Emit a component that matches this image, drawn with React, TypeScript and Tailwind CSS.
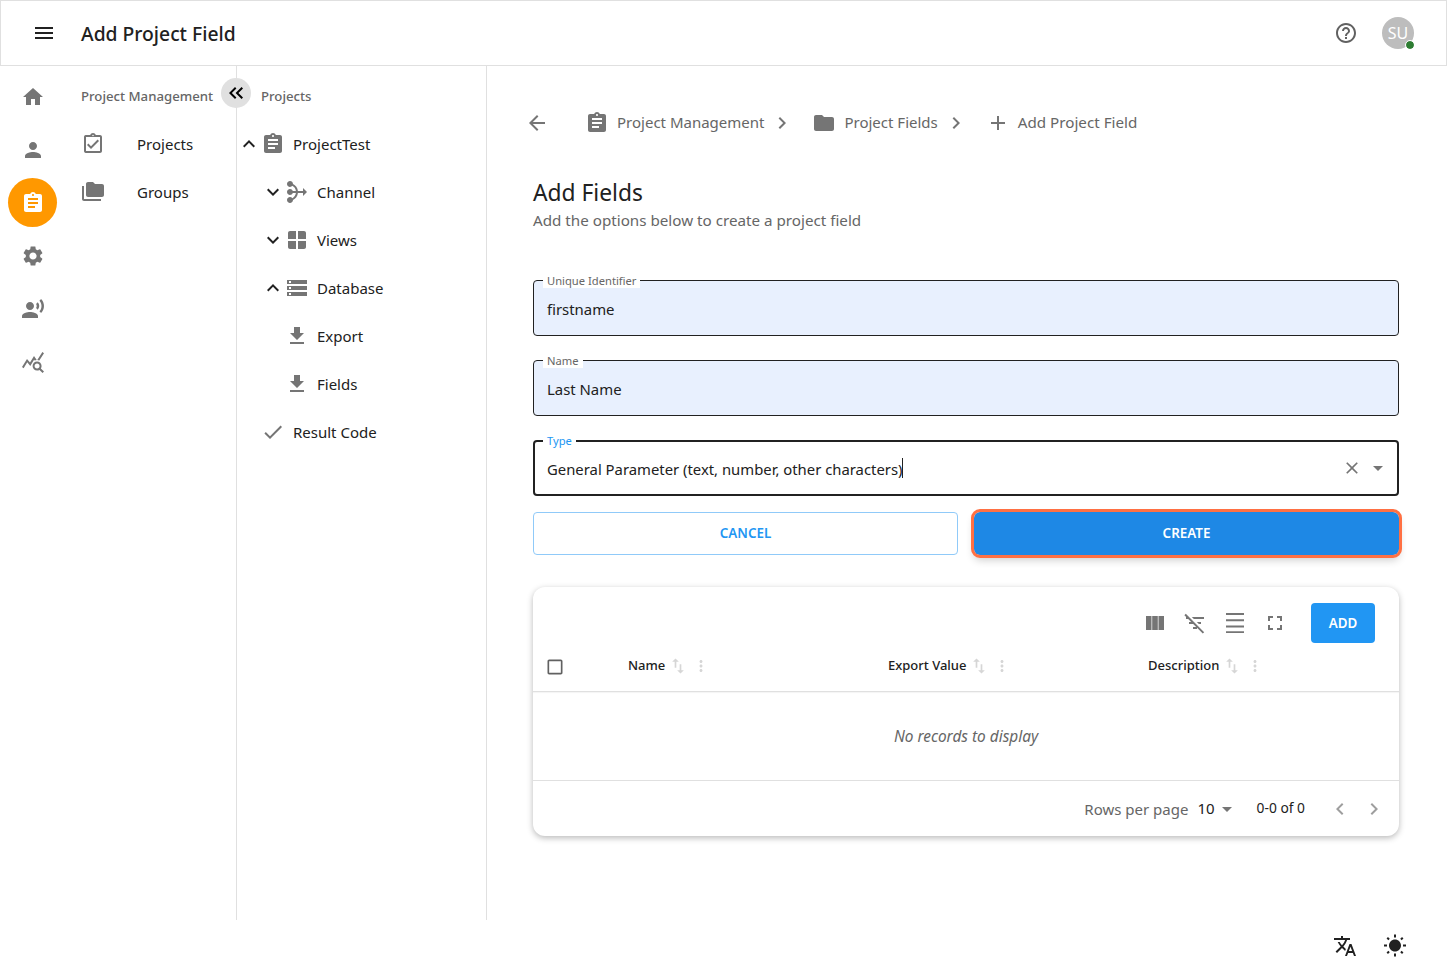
import type { FC } from 'react';

const paths = {
  menu: 'M3 18h18v-2H3v2zm0-5h18v-2H3v2zm0-7v2h18V6H3z',
  home: 'M10 20v-6h4v6h5v-8h3L12 3 2 12h3v8z',
  person: 'M12 12c2.21 0 4-1.79 4-4s-1.79-4-4-4-4 1.79-4 4 1.79 4 4 4zm0 2c-2.67 0-8 1.34-8 4v2h16v-2c0-2.66-5.33-4-8-4z',
  assignment: 'M19 3h-4.18C14.4 1.84 13.3 1 12 1c-1.3 0-2.4.84-2.82 2H5c-1.1 0-2 .9-2 2v14c0 1.1.9 2 2 2h14c1.1 0 2-.9 2-2V5c0-1.1-.9-2-2-2zm-7 0c.55 0 1 .45 1 1s-.45 1-1 1-1-.45-1-1 .45-1 1-1zm2 14H7v-2h7v2zm3-4H7v-2h10v2zm0-4H7V7h10v2z',
  settings: 'M19.14 12.94c.04-.3.06-.61.06-.94 0-.32-.02-.64-.07-.94l2.03-1.58c.18-.14.23-.41.12-.61l-1.92-3.32c-.12-.22-.37-.29-.59-.22l-2.39.96c-.5-.38-1.03-.7-1.62-.94l-.36-2.54c-.04-.24-.24-.41-.48-.41h-3.84c-.24 0-.43.17-.47.41l-.36 2.54c-.59.24-1.13.57-1.62.94l-2.39-.96c-.22-.08-.47 0-.59.22L2.74 8.87c-.12.21-.08.47.12.61l2.03 1.58c-.05.3-.09.63-.09.94s.02.64.07.94l-2.03 1.58c-.18.14-.23.41-.12.61l1.92 3.32c.12.22.37.29.59.22l2.39-.96c.5.38 1.03.7 1.62.94l.36 2.54c.05.24.24.41.48.41h3.84c.24 0 .44-.17.47-.41l.36-2.54c.59-.24 1.13-.56 1.62-.94l2.39.96c.22.08.47 0 .59-.22l1.92-3.32c.12-.22.07-.47-.12-.61l-2.01-1.58zM12 15.6c-1.98 0-3.6-1.62-3.6-3.6s1.62-3.6 3.6-3.6 3.6 1.62 3.6 3.6-1.62 3.6-3.6 3.6z',
  voice: 'M9 13c2.21 0 4-1.79 4-4s-1.79-4-4-4-4 1.79-4 4 1.79 4 4 4zm0 2c-2.67 0-8 1.34-8 4v2h16v-2c0-2.66-5.33-4-8-4zm7.76-9.64l-1.68 1.69c.84 1.18.84 2.71 0 3.89l1.68 1.69c2.02-2.02 2.02-5.07 0-7.27zM20.07 2l-1.63 1.63c2.77 3.02 2.77 7.56 0 10.74L20.07 16c3.9-3.89 3.91-9.95 0-14z',
  query: 'M19.88 18.47c.44-.7.7-1.51.7-2.39 0-2.49-2.01-4.5-4.5-4.5s-4.5 2.01-4.5 4.5 2.01 4.5 4.49 4.5c.88 0 1.7-.26 2.39-.7L21.58 23 23 21.58l-3.12-3.11zm-3.8.11c-1.38 0-2.5-1.12-2.5-2.5s1.12-2.5 2.5-2.5 2.5 1.12 2.5 2.5-1.12 2.5-2.5 2.5zm-.36-8.5c-.74.02-1.45.18-2.1.45l-.55-.83-3.8 6.18-3.01-3.52-3.63 5.81L1 17l5-8 3 3.5L13 6l2.72 4.08zm2.59.5c-.64-.28-1.33-.45-2.05-.49L21.38 2 23 3.18l-4.69 7.4z',
  turnedIn: 'M18 9l-1.41-1.42L10 14.17l-2.59-2.58L6 13l4 4zm1-6h-4.18C14.4 1.84 13.3 1 12 1c-1.3 0-2.4.84-2.82 2H5c-.14 0-.27.01-.4.04-.39.08-.74.28-1.01.55-.18.18-.33.4-.43.64-.1.23-.16.49-.16.77v14c0 .27.06.54.16.78s.25.45.43.64c.27.27.62.47 1.01.55.13.02.26.03.4.03h14c1.1 0 2-.9 2-2V5c0-1.1-.9-2-2-2zm-7-.25c.41 0 .75.34.75.75s-.34.75-.75.75-.75-.34-.75-.75.34-.75.75-.75zM19 19H5V5h14v14z',
  folderCopy: 'M3 19h17v2H3c-1.1 0-2-.9-2-2V6h2v13zM23 6v9c0 1.1-.9 2-2 2H7c-1.1 0-2-.9-2-2l.01-11C5.01 2.9 5.9 2 7 2h5l2 2h7c1.1 0 2 .9 2 2z',
  doubleLeft: 'M17.59 18L19 16.59 14.42 12 19 7.41 17.59 6l-6 6zM11 18l1.41-1.41L7.83 12l4.58-4.59L11 6l-6 6z',
  expandLess: 'M12 8l-6 6 1.41 1.41L12 10.83l4.59 4.58L18 14z',
  expandMore: 'M16.59 8.59L12 13.17 7.41 8.59 6 10l6 6 6-6z',
  mediation: 'M18 16l4-4-4-4v3h-5.06c-.34-3.1-2.26-5.72-4.94-7.05C7.96 2.31 6.64 1 5 1 3.34 1 2 2.34 2 4s1.34 3 3 3c.95 0 1.78-.45 2.33-1.14C9.23 6.9 10.6 8.77 10.92 11h-3.1C7.4 9.84 6.3 9 5 9c-1.66 0-3 1.34-3 3s1.34 3 3 3c1.3 0 2.4-.84 2.82-2h3.1c-.32 2.23-1.69 4.1-3.58 5.14C6.78 17.45 5.95 17 5 17c-1.66 0-3 1.34-3 3s1.34 3 3 3c1.64 0 2.96-1.31 2.99-2.95 2.68-1.33 4.6-3.95 4.94-7.05H18v3z',
  windowIcon: 'M3 5v6h8V3H5c-1.1 0-2 .9-2 2zm10-2v8h8V5c0-1.1-.9-2-2-2h-6zM3 13v6c0 1.1.9 2 2 2h6v-8H3zm10 8h6c1.1 0 2-.9 2-2v-6h-8v8z',
  storage: 'M2 20h20v-4H2v4zm2-3h2v2H4v-2zM2 4v4h20V4H2zm4 3H4V5h2v2zm-4 7h20v-4H2v4zm2-3h2v2H4v-2z',
  download: 'M19 9h-4V3H9v6H5l7 7 7-7zM5 18v2h14v-2H5z',
  check: 'M9 16.17L4.83 12l-1.42 1.41L9 19 21 7l-1.41-1.41z',
  back: 'M20 11H7.83l5.59-5.59L12 4l-8 8 8 8 1.41-1.41L7.83 13H20v-2z',
  right: 'M10 6L8.59 7.41 13.17 12l-4.58 4.59L10 18l6-6z',
  left: 'M15.41 7.41L14 6l-6 6 6 6 1.41-1.41L10.83 12z',
  folder: 'M10 4H4c-1.1 0-1.99.9-1.99 2L2 18c0 1.1.9 2 2 2h16c1.1 0 2-.9 2-2V8c0-1.1-.9-2-2-2h-8l-2-2z',
  add: 'M19 13h-6v6h-2v-6H5v-2h6V5h2v6h6v2z',
  help: 'M11 18h2v-2h-2v2zm1-16C6.48 2 2 6.48 2 12s4.48 10 10 10 10-4.48 10-10S17.52 2 12 2zm0 18c-4.41 0-8-3.59-8-8s3.59-8 8-8 8 3.59 8 8-3.59 8-8 8zm0-14c-2.21 0-4 1.79-4 4h2c0-1.1.9-2 2-2s2 .9 2 2c0 2-3 1.75-3 5h2c0-2.25 3-2.5 3-5 0-2.21-1.79-4-4-4z',
  close: 'M19 6.41L17.59 5 12 10.59 6.41 5 5 6.41 10.59 12 5 17.59 6.41 19 12 13.41 17.59 19 19 17.59 13.41 12z',
  dropDown: 'M7 10l5 5 5-5z',
  viewColumn: 'M3 5h5.5v14H3zM9.2 5h5.6v14H9.2zM15.5 5H21v14h-5.5z',
  filterOff: 'M10.83 8H21V6H8.83l2 2zm5 5H18v-2h-4.17l2 2zM14 16.83V18h-4v-2h3.17l-3-3H6v-2h2.17l-3-3H3V6h.17L1.39 4.22 2.8 2.81l18.38 18.38-1.41 1.41L14 16.83z',
  headline: 'M3 2h18v1.9H3zM3 8.3h18v1.9H3zM3 14.6h18v1.9H3zM3 20.2h18v1.9H3z',
  fullscreen: 'M7 14H5v5h5v-2H7v-3zm-2-4h2V7h3V5H5v5zm12 7h-3v2h5v-5h-2v3zM14 5v2h3v3h2V5h-5z',
  sort: 'M16 17.01V10h-2v7.01h-3L15 21l4-3.99h-3zM9 3L5 6.99h3V14h2V6.99h3L9 3z',
  moreVert: 'M12 8c1.1 0 2-.9 2-2s-.9-2-2-2-2 .9-2 2 .9 2 2 2zm0 2c-1.1 0-2 .9-2 2s.9 2 2 2 2-.9 2-2-.9-2-2-2zm0 6c-1.1 0-2 .9-2 2s.9 2 2 2 2-.9 2-2-.9-2-2-2z',
  checkbox: 'M19 5v14H5V5h14m0-2H5c-1.1 0-2 .9-2 2v14c0 1.1.9 2 2 2h14c1.1 0 2-.9 2-2V5c0-1.1-.9-2-2-2z',
  translate: 'M12.87 15.07l-2.54-2.51.03-.03c1.74-1.94 2.98-4.17 3.71-6.53H17V4h-7V2H8v2H1v1.99h11.17C11.5 7.92 10.44 9.75 9 11.35 8.07 10.32 7.3 9.19 6.69 8h-2c.73 1.63 1.73 3.17 2.98 4.56l-5.09 5.02L4 19l5-5 3.11 3.11.76-2.04zM18.5 10h-2L12 22h2l1.12-3h4.75L21 22h2l-4.5-12zm-2.62 7l1.62-4.33L19.12 17h-3.24z',
  sun: 'M6.76 4.84l-1.8-1.79-1.41 1.41 1.79 1.79 1.42-1.41zM4 10.5H1v2h3v-2zm9-9.95h-2V3.5h2V.55zm7.45 3.91l-1.41-1.41-1.79 1.79 1.41 1.41 1.79-1.79zm-3.21 13.7l1.79 1.8 1.41-1.41-1.8-1.79-1.4 1.4zM20 10.5v2h3v-2h-3zm-8-5c-3.31 0-6 2.69-6 6s2.69 6 6 6 6-2.69 6-6-2.69-6-6-6zm-1 16.95h2V19.5h-2v2.95zm-7.45-3.91l1.41 1.41 1.79-1.8-1.41-1.41-1.79 1.8z',
};

type IconName = keyof typeof paths;

const Icon: FC<{ name: IconName; className?: string }> = ({ name, className = 'w-6 h-6 text-[#757575]' }) => (
  <svg viewBox="0 0 24 24" fill="currentColor" className={`shrink-0 ${className}`}>
    <path d={paths[name]} />
  </svg>
);

const railItems: { name: IconName; active?: boolean }[] = [
  { name: 'home' },
  { name: 'person' },
  { name: 'assignment', active: true },
  { name: 'settings' },
  { name: 'voice' },
  { name: 'query' },
];

type TreeRow = { label: string; icon: IconName; toggle?: IconName; nested?: boolean };

const treeRows: TreeRow[] = [
  { label: 'ProjectTest', icon: 'assignment', toggle: 'expandLess' },
  { label: 'Channel', icon: 'mediation', toggle: 'expandMore', nested: true },
  { label: 'Views', icon: 'windowIcon', toggle: 'expandMore', nested: true },
  { label: 'Database', icon: 'storage', toggle: 'expandLess', nested: true },
  { label: 'Export', icon: 'download', nested: true },
  { label: 'Fields', icon: 'download', nested: true },
  { label: 'Result Code', icon: 'check' },
];

const Field: FC<{ label: string; value: string }> = ({ label, value }) => (
  <div className="relative h-14 rounded bg-[#e8f0fe] border border-[#212121] flex items-center px-[13px] text-[14.9px] text-[#212121]">
    <span className="absolute left-[9px] -top-[7px] bg-white px-[4px] text-[11.2px] leading-[14px] text-[#666666]">{label}</span>
    <span className="pt-[2px]">{value}</span>
  </div>
);

const columns = ['Name', 'Export Value', 'Description'];

export default function App() {
  return (
    <div className="w-[1447px] h-[970px] bg-white flex flex-col overflow-hidden text-[#212121] font-['Noto_Sans',sans-serif]">
      <header className="h-[66px] shrink-0 border border-[#e0e0e0] flex items-center pl-[31px] pr-[32px]">
        <Icon name="menu" className="w-6 h-6 text-[#212121]" />
        <h1 className="ml-[25px] pt-[2px] text-[19.3px] font-medium">Add Project Field</h1>
        <div className="ml-auto flex items-center gap-[24px]">
          <Icon name="help" className="w-6 h-6 text-[#616161]" />
          <div className="relative w-8 h-8 rounded-full bg-[#bdbdbd] text-white flex items-center justify-center text-[16px]">
            SU
            <span className="absolute right-0 bottom-0 w-2 h-2 rounded-full bg-[#2e7d32] outline outline-1 outline-white"></span>
          </div>
        </div>
      </header>

      <div className="flex h-[854px] shrink-0">
        <nav className="w-[66px] shrink-0 pt-[6px] pl-[8px] flex flex-col gap-[4px]">
          {railItems.map((item) => (
            <div
              key={item.name}
              className={`w-[49px] h-[49px] rounded-full flex items-center justify-center ${item.active ? 'bg-[#ff9800]' : ''}`}
            >
              <Icon name={item.name} className={`w-6 h-6 ${item.active ? 'text-white' : 'text-[#757575]'}`} />
            </div>
          ))}
        </nav>

        <div className="relative w-[171px] shrink-0 border-r border-[#e0e0e0] pl-[15px]">
          <div className="h-[54px] pt-[7px] flex items-center text-[13.2px] font-medium text-[#666666]">Project Management</div>
          <div className="h-12 flex items-center">
            <Icon name="turnedIn" />
            <span className="ml-8 text-[15px]">Projects</span>
          </div>
          <div className="h-12 flex items-center">
            <Icon name="folderCopy" />
            <span className="ml-8 text-[15px]">Groups</span>
          </div>
          <button className="absolute -right-[15px] top-[12px] w-[30px] h-[30px] rounded-full bg-[#e0e0e0] flex items-center justify-center">
            <Icon name="doubleLeft" className="w-6 h-6 text-black" />
          </button>
        </div>

        <div className="w-[250px] shrink-0 border-r border-[#e0e0e0]">
          <div className="h-[54px] pt-[7px] flex items-center pl-[24px] text-[13.2px] font-medium text-[#666666]">Projects</div>
          {treeRows.map((row) => (
            <div key={row.label} className={`h-12 flex items-center ${row.nested ? 'pl-[24px]' : ''}`}>
              <div className="w-[24px] h-[24px] shrink-0">
                {row.toggle && <Icon name={row.toggle} className="w-6 h-6 text-[#212121]" />}
              </div>
              <Icon name={row.icon} />
              <span className="ml-[8px] text-[15px]">{row.label}</span>
            </div>
          ))}
        </div>

        <main className="w-[960px] shrink-0 pl-[46px] pr-[48px]">
          <div className="h-[24px] mt-[45px] -ml-[8px] flex items-center text-[15px] text-[#666666]">
            <Icon name="back" />
            <Icon name="assignment" className="ml-[36px] w-6 h-6 text-[#757575]" />
            <span className="ml-[8px] pb-[2px]">Project Management</span>
            <Icon name="right" className="ml-[6px] w-6 h-6 text-[#757575]" />
            <Icon name="folder" className="ml-[18px] w-6 h-6 text-[#757575]" />
            <span className="ml-[8px] pb-[2px]">Project Fields</span>
            <Icon name="right" className="ml-[6px] w-6 h-6 text-[#757575]" />
            <Icon name="add" className="ml-[18px] w-6 h-6 text-[#757575]" />
            <span className="ml-[8px] pb-[2px] text-[15.2px]">Add Project Field</span>
          </div>

          <h2 className="mt-[42px] text-[22.8px] leading-[32px]">Add Fields</h2>
          <p className="text-[15.2px] leading-[22px] text-[#666666]">Add the options below to create a project field</p>

          <div className="mt-[49px] flex flex-col gap-6">
            <Field label="Unique Identifier" value="firstname" />
            <Field label="Name" value="Last Name" />
            <div className="relative h-14 rounded border-2 border-[#212121] flex items-center pl-[12px] pr-[7px] text-[14.85px]">
              <span className="absolute left-[8px] -top-[8px] bg-white px-[4px] text-[11.2px] leading-[14px] text-[#2196f3]">Type</span>
              <span className="pt-[2px]">General Parameter (text, number, other characters)</span>
              <span className="w-px h-[20px] bg-[#212121]"></span>
              <Icon name="close" className="ml-auto w-5 h-5 text-[#757575]" />
              <Icon name="dropDown" className="ml-[4px] w-6 h-6 text-[#757575]" />
            </div>
          </div>

          <div className="mt-4 flex gap-[16px] items-stretch">
            <button className="w-[425px] h-[43px] rounded border border-[#90caf9] text-[#2196f3] text-[13.4px] font-semibold">CANCEL</button>
            <button className="flex-1 h-[43px] rounded-[6px] bg-[#1e88e5] text-white text-[13.4px] font-semibold outline-[3px] outline-solid outline-[#ff7043] shadow-[0_5px_8px_rgba(0,0,0,0.2)]">CREATE</button>
          </div>

          <section className="mt-[32px] h-[249px] rounded-xl bg-white shadow-[0_2px_6px_rgba(0,0,0,0.28)] flex flex-col">
            <div className="h-10 mt-4 pr-[24px] flex items-center justify-end shrink-0">
              <div className="flex items-center gap-[16px] mr-[24px]">
                <Icon name="viewColumn" />
                <Icon name="filterOff" />
                <Icon name="headline" />
                <Icon name="fullscreen" />
              </div>
              <button className="w-16 h-10 rounded bg-[#2196f3] text-white text-[13.4px] font-semibold">ADD</button>
            </div>
            <div className="h-[49px] pb-[3px] grid grid-cols-[95px_260px_260px_1fr] items-center border-b border-[#e0e0e0] shadow-[0_1px_1px_rgba(0,0,0,0.04)] shrink-0">
              <div className="pl-[12px] pt-[3px]">
                <Icon name="checkbox" className="w-5 h-5 text-[#616161]" />
              </div>
              {columns.map((column) => (
                <div key={column} className="flex items-center text-[13px] font-medium">
                  <span>{column}</span>
                  <Icon name="sort" className="ml-[3px] w-5 h-5 text-[#d6d6d6]" />
                  <Icon name="moreVert" className="ml-[4px] w-[18px] h-[18px] text-[#d6d6d6]" />
                </div>
              ))}
            </div>
            <div className="h-[89px] pt-[2px] border-b border-[#e0e0e0] flex items-center justify-center text-[15.4px] italic text-[#666666] shrink-0">
              No records to display
            </div>
            <div className="flex-1 flex items-center justify-end pr-[13px]">
              <span className="text-[15px] text-[#666666] pt-[2px]">Rows per page</span>
              <span className="ml-[9px] text-[15px]">10</span>
              <Icon name="dropDown" className="w-6 h-6 text-[#757575]" />
              <span className="ml-[18px] text-[13.8px]">0-0 of 0</span>
              <Icon name="left" className="ml-[23px] w-6 h-6 text-[#9e9e9e]" />
              <Icon name="right" className="ml-[10px] w-6 h-6 text-[#9e9e9e]" />
            </div>
          </section>
        </main>
      </div>

      <footer className="flex-1 flex items-center justify-end gap-[26px] pr-[40px] pt-[1px]">
        <Icon name="translate" className="w-6 h-6 text-[#212121]" />
        <Icon name="sun" className="w-6 h-6 text-[#212121]" />
      </footer>
    </div>
  );
}
